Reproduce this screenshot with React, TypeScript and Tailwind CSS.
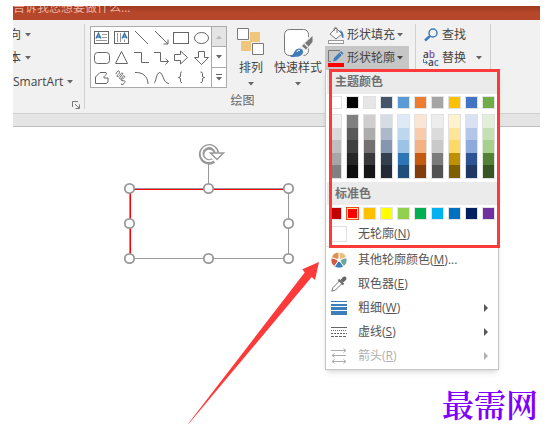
import React from 'react';

const uiFont = "font-['Open_Sans','Noto_Sans_CJK_SC',sans-serif]";

const themeColors = [
  { base: '#ffffff', tints: ['#f2f2f2', '#d9d9d9', '#bfbfbf', '#a6a6a6', '#808080'] },
  { base: '#000000', tints: ['#808080', '#595959', '#404040', '#262626', '#0d0d0d'] },
  { base: '#e7e6e6', tints: ['#d0cece', '#aeabab', '#757070', '#3a3838', '#171616'] },
  { base: '#44546a', tints: ['#d6dce4', '#adb9ca', '#8496b0', '#323f4f', '#222a35'] },
  { base: '#5b9bd5', tints: ['#deebf6', '#bdd7ee', '#9cc3e5', '#2e75b5', '#1e4e79'] },
  { base: '#ed7d31', tints: ['#fbe5d5', '#f7cbac', '#f4b183', '#c55a11', '#833c0b'] },
  { base: '#a5a5a5', tints: ['#ededed', '#dbdbdb', '#c9c9c9', '#7b7b7b', '#525252'] },
  { base: '#ffc000', tints: ['#fff2cc', '#fee599', '#ffd965', '#bf9000', '#7f6000'] },
  { base: '#4472c4', tints: ['#d9e2f3', '#b4c6e7', '#8eaadb', '#2f5496', '#1f3864'] },
  { base: '#70ad47', tints: ['#e2efd9', '#c5e0b3', '#a8d08d', '#538135', '#375623'] },
];

const standardColors = [
  '#c00000', '#ff0000', '#ffc000', '#ffff00', '#92d050',
  '#00b050', '#00b0f0', '#0070c0', '#002060', '#7030a0',
];

const shapes: { name: string; drawing: React.ReactNode }[] = [
  {
    name: '文本框',
    drawing: (
      <>
        <rect x="3.5" y="4.5" width="14" height="12" />
        <path d="M11 7.5h5M11 10.5h5M5 13.5h11" stroke="#999" />
        <path d="M5 11.5 7.5 6.5 10 11.5M6 10h3" stroke="#3b76b5" strokeWidth="1.5" />
      </>
    ),
  },
  {
    name: '竖排文本框',
    drawing: (
      <>
        <rect x="3.5" y="4.5" width="14" height="12" />
        <path d="M6.5 6v9M9.5 6v9M13.5 12.5v2.5" stroke="#999" />
        <path d="M11 11.5 13.5 6.5 16 11.5M12 10h3" stroke="#3b76b5" strokeWidth="1.5" />
      </>
    ),
  },
  { name: '直线', drawing: <path d="M4 4 17 17" /> },
  { name: '箭头', drawing: <path d="M4 4 17 17M17 12.5V17H12.5" /> },
  { name: '矩形', drawing: <rect x="2.5" y="5.5" width="15" height="11" /> },
  { name: '椭圆', drawing: <ellipse cx="10.5" cy="11" rx="7" ry="5.5" /> },
  { name: '圆角矩形', drawing: <rect x="3.5" y="5.5" width="15" height="11" rx="3" /> },
  { name: '三角形', drawing: <path d="M10.5 4.5 16.5 16.5H4.5Z" /> },
  { name: '肘形连接符', drawing: <path d="M3 5.5H10.5V15.5H18" /> },
  { name: '肘形箭头', drawing: <path d="M3 5.5H9.5V14.5H17.5M14.5 11.5 17.5 14.5 14.5 17.5" /> },
  { name: '右箭头', drawing: <path d="M3.5 7.5H9.5V4L16.5 10.5 9.5 17V13.5H3.5Z" /> },
  { name: '下箭头', drawing: <path d="M7.5 4.5H13.5V10.5H17.5L10.5 17.5 3.5 10.5H7.5Z" /> },
  {
    name: '任意多边形',
    drawing: <path d="M4.5 16.5V10L9 5.5H15C17 8 12 8.5 13 11H17V14.5L15.5 16.5Z" />,
  },
  {
    name: '自由曲线',
    drawing: (
      <path d="M5 7C6 4 8 3 8.5 5S4 9 6.5 9.5 10 5 11.5 6 7 11 9 12 12 7 13.5 9 8 13 11 13.5 15 14 13 16.5 9 16 11 17.5" />
    ),
  },
  { name: '弧形', drawing: <path d="M4 5.5C11 5 17 9 17 17" /> },
  { name: '曲线', drawing: <path d="M3 16C5 16 5 6 8.5 5.5S12 16.5 18 16.5" /> },
  {
    name: '左大括号',
    drawing: <path d="M11 5H10.5Q9.5 5 9.5 6.5V9Q9.5 10.5 7.5 10.5 9.5 10.5 9.5 12V14.5Q9.5 15.5 11 15.5" />,
  },
  {
    name: '右大括号',
    drawing: <path d="M9.5 5Q11.5 5 11.5 6.5V9Q11.5 10.5 13.5 10.5 11.5 10.5 11.5 12V14.5Q11.5 15.5 9.5 15.5" />,
  },
];

const Caret = ({ className = 'text-[#666]' }: { className?: string }) => (
  <svg width="6" height="4" viewBox="0 0 6 4" className={`shrink-0 ${className}`} aria-hidden="true">
    <path d="M0 0h6L3 3.5Z" fill="currentColor" />
  </svg>
);

const ShapeGallery = () => (
  <div className="mt-0.5 flex h-[62px] w-[137px] border border-[#ababab] bg-white">
    <div className="grid flex-1 grid-cols-6 grid-rows-3">
      {shapes.map(({ name, drawing }) => (
        <button key={name} aria-label={name} className="flex items-center justify-center">
          <svg width="20" height="20" viewBox="0 0 20 20" fill="none" stroke="#666" strokeWidth="1">
            {drawing}
          </svg>
        </button>
      ))}
    </div>
    <div className="flex w-[15px] flex-col divide-y divide-[#ababab] border-l border-[#ababab]">
      <button aria-label="向上" className="flex flex-1 items-center justify-center bg-[#e4e4e4]">
        <Caret className="rotate-180 text-[#bbb]" />
      </button>
      <button aria-label="向下" className="flex flex-1 items-center justify-center">
        <Caret />
      </button>
      <button aria-label="其他" className="flex flex-1 flex-col items-center justify-center gap-0.5">
        <span className="h-px w-1.5 bg-[#666]" />
        <Caret />
      </button>
    </div>
  </div>
);

const ArrangeIcon = () => (
  <svg width="28" height="28" viewBox="0 0 28 28" aria-hidden="true">
    <path d="M13 4h10v10H13zM4 13h10v10H4z" fill="#f0c67d" />
    <path d="M.5.5h11v11H.5zM15.5 15.5h11v11h-11z" fill="#fff" stroke="#7a7a7a" />
  </svg>
);

const QuickStyleIcon = () => (
  <svg width="30" height="30" viewBox="0 0 30 30" aria-hidden="true">
    <rect x="1.5" y="1.5" width="24" height="26" rx="5" fill="#fff" stroke="#777" />
    <path d="M14 22 29 5V16L20 28H12Z" fill="#f1f1f1" />
    <path d="M29.500 8 19 18 23 21.500 29.500 14Z" fill="#777" />
    <path d="M21.500 15.500 25 19" stroke="#eee" strokeWidth="1.5" />
    <path d="M7 29C12 26 11 21 16 20.5 20 20.5 21 24 19 26.5 17 29 12 29 7 29Z" fill="#3f7cba" />
    <path d="M14 24a2 2 0 0 1 3-1.500" fill="none" stroke="#fff" />
  </svg>
);

const FillIcon = () => (
  <svg width="17" height="18" viewBox="0 0 17 18" fill="none" aria-hidden="true">
    <path d="M2 8 8 2 14 8 8 13Z" fill="#fff" stroke="#777" />
    <path d="M6 5V2.5Q7.5 0 9 2.5V7" stroke="#777" />
    <path d="M11.5 4Q16 5 15.5 12 13 12 13.5 8Z" fill="#3f7cba" />
    <rect x=".5" y="14.5" width="15" height="3" fill="#fff" stroke="#999" />
  </svg>
);

const OutlineIcon = () => (
  <svg width="17" height="18" viewBox="0 0 17 18" fill="none" aria-hidden="true">
    <path d="M12 1.5H.5V12.5H3" stroke="#777" />
    <path d="M5 12.5 6 9 13 2 15.5 4.5 8.5 11.5Z" fill="#3f7cba" />
    <path d="M11.5 3.5 14 6" stroke="#c6c6c6" />
    <path d="M0 14h16v4H0z" fill="#f00" />
  </svg>
);

const FindIcon = () => (
  <svg width="17" height="16" viewBox="0 0 17 16" fill="none" stroke="#3f7cba" aria-hidden="true">
    <circle cx="10" cy="6" r="4" strokeWidth="1.5" />
    <path d="M7 9 2 13.5" strokeWidth="2.5" />
  </svg>
);

const ReplaceIcon = () => (
  <span className="flex w-[17px] flex-col text-[10px] leading-2 font-semibold" aria-hidden="true">
    <span className="text-left">a<span className="text-[#8a4fa8]">b</span></span>
    <span className="flex items-center">
      <svg width="5" height="6" viewBox="0 0 5 6" fill="none" stroke="#3f7cba">
        <path d="M.5 0V3.500H4M2.500 1.500 4.500 3.500 2.500 5.500" />
      </svg>
      a<span className="text-[#3f7cba]">c</span>
    </span>
  </span>
);

const ColorWheelIcon = () => (
  <svg width="16" height="16" viewBox="0 0 16 16" stroke="#fff" aria-hidden="true">
    <path d="M8 8V0A8 8 0 0 1 15.6 5.5Z" fill="#eabf7d" />
    <path d="M8 8 15.6 5.5A8 8 0 0 1 12.7 14.5Z" fill="#6ea597" />
    <path d="M8 8 12.7 14.5A8 8 0 0 1 3.3 14.5Z" fill="#3f7cba" />
    <path d="M8 8 3.3 14.5A8 8 0 0 1 .4 5.5Z" fill="#d65a3f" />
    <path d="M8 8 .4 5.5A8 8 0 0 1 8 0Z" fill="#e3904d" />
    <circle cx="8" cy="8" r="1.5" fill="#fff" />
  </svg>
);

const EyedropperIcon = () => (
  <svg width="16" height="16" viewBox="0 0 16 16" fill="none" aria-hidden="true">
    <path d="M8.5 5 2 11.5.8 15.2 4.5 14 11 7.5" stroke="#777" />
    <path d="M7.5 3.5 12.5 8.5" stroke="#666" strokeWidth="2" />
    <path d="M9.5 4 12 1Q14 0 15 1T15 4L12 6.5Z" fill="#666" />
  </svg>
);

const WeightIcon = () => (
  <svg width="16" height="14" viewBox="0 0 16 14" fill="#3f7cba" aria-hidden="true">
    <path d="M0 0h16v1H0zM0 3h16v2H0zM0 6h16v3H0zM0 10h16v4H0z" />
  </svg>
);

const DashesIcon = () => (
  <svg width="16" height="11" viewBox="0 0 16 11" stroke="#666" aria-hidden="true">
    <path d="M0 .5h16" />
    <path d="M0 3.5h16" strokeDasharray="1 1" />
    <path d="M0 6.5h16" strokeDasharray="2 1" />
    <path d="M0 9.5h16" strokeDasharray="3 1" />
  </svg>
);

const ArrowsIcon = () => (
  <svg width="16" height="16" viewBox="0 0 16 16" fill="none" stroke="#aaa" aria-hidden="true">
    <path d="M0 2.5h15M12.5.5l2.5 2-2.5 2" />
    <path d="M1 7.5h14M3.5 5.5 1 7.5l2.5 2" />
    <path d="M1 13.5h14M3.5 11.5 1 13.5l2.5 2M12.5 11.5l2.5 2-2.5 2" />
  </svg>
);

const menuItems = [
  { label: '其他轮廓颜色', hotkey: 'M', suffix: '...', icon: ColorWheelIcon, submenu: false, disabled: false },
  { label: '取色器', hotkey: 'E', suffix: '', icon: EyedropperIcon, submenu: false, disabled: false },
  { label: '粗细', hotkey: 'W', suffix: '', icon: WeightIcon, submenu: true, disabled: false },
  { label: '虚线', hotkey: 'S', suffix: '', icon: DashesIcon, submenu: true, disabled: false },
  { label: '箭头', hotkey: 'R', suffix: '', icon: ArrowsIcon, submenu: true, disabled: true },
];

const OutlineMenu = () => (
  <div
    role="menu"
    aria-label="形状轮廓"
    className="absolute top-full left-0 z-10 w-[174px] border border-[#c6c6c6] bg-white pb-px text-[#555] shadow-md"
  >
    <h3 className="mx-px flex h-6 items-center bg-[#ebebeb] pl-2 font-bold text-[#707070]">主题颜色</h3>
    <div className="flex gap-1 px-[3px] pt-0.5">
      {themeColors.map(({ base, tints }) => (
        <div key={base} className="flex w-[13px] flex-col gap-[5px]">
          <button aria-label={base} className="h-[13px] border border-[#e2e2e2]" style={{ backgroundColor: base }} />
          <div className="flex h-[65px] flex-col border border-[#e2e2e2]">
            {tints.map((tint) => (
              <button key={tint} aria-label={tint} className="flex-1" style={{ backgroundColor: tint }} />
            ))}
          </div>
        </div>
      ))}
    </div>
    <h3 className="mx-px mt-[3px] flex h-[23px] items-center bg-[#ebebeb] pl-2 font-bold text-[#707070]">标准色</h3>
    <div className="flex gap-1 px-[3px] py-0.5">
      {standardColors.map((color) => (
        <button
          key={color}
          aria-label={color}
          className={`h-[13px] w-[13px] border ${
            color === '#ff0000' ? 'border-[#f04a1c] ring-1 ring-[#ffe0a0] ring-inset' : 'border-[#e2e2e2]'
          }`}
          style={{ backgroundColor: color }}
        />
      ))}
    </div>
    <button role="menuitem" className="flex h-6 w-full items-center gap-[11px] pl-[5px]">
      <span className="h-4 w-4 border border-[#e2e2e2] bg-white" />
      <span>无轮廓(<u>N</u>)</span>
    </button>
    <hr className="mb-px border-[#e2e2e2]" />
    {menuItems.map(({ label, hotkey, suffix, icon: Icon, submenu, disabled }) => (
      <button
        key={label}
        role="menuitem"
        disabled={disabled}
        className={`flex h-6 w-full items-center gap-[11px] pr-2.5 pl-[5px] ${disabled ? 'text-[#b0b0b0]' : ''}`}
      >
        <Icon />
        <span className="flex-1 text-left">{label}(<u>{hotkey}</u>){suffix}</span>
        {submenu && (
          <svg width="4" height="8" viewBox="0 0 4 8" fill="currentColor" aria-hidden="true">
            <path d="M0 0 4 4 0 8Z" />
          </svg>
        )}
      </button>
    ))}
    {/* callout around the colour area */}
    <div className="pointer-events-none absolute -top-px left-[3px] h-[179px] w-[171px] border-3 border-[#fd3a3a]" />
  </div>
);

const Ribbon = () => (
  <div className="flex h-[93px] bg-[#f1f1f1] pt-1 pb-1">
    <div className="flex w-[72px] flex-col border-r border-[#d0d0d0] text-[#444]">
      <button aria-label="文字方向" className="flex h-[22px] items-center gap-1">
        <span className="flex w-2 justify-end overflow-hidden">向</span>
        <Caret />
      </button>
      <button aria-label="对齐文本" className="flex h-6 items-center gap-1">
        <span className="flex w-2 justify-end overflow-hidden">本</span>
        <Caret />
      </button>
      <button className="flex h-[23px] items-center gap-1">
        SmartArt
        <Caret />
      </button>
      <button aria-label="段落设置" className="mt-auto mr-1 self-end">
        <svg width="8" height="8" viewBox="0 0 8 8" fill="none" stroke="#777">
          <path d="M.5 6V.5H6M3 3l4 4M7.5 3.5v4h-4" />
        </svg>
      </button>
    </div>

    <div className="flex w-[331px] flex-col border-r border-[#d0d0d0] pl-[5px] text-[#444]">
      <div className="flex">
        <ShapeGallery />
        <button className="flex w-12 flex-col items-center pt-1">
          <ArrangeIcon />
          <span className="mt-1 leading-4">排列</span>
          <span className="pt-1.5"><Caret /></span>
        </button>
        <button className="mr-1 flex w-[46px] flex-col items-center pt-1 whitespace-nowrap">
          <QuickStyleIcon />
          <span className="mt-0.5 leading-4">快速样式</span>
          <span className="pt-1.5"><Caret /></span>
        </button>
        <div className="flex w-[84px] flex-col">
          <button className="flex h-[22px] items-center gap-0.5 pl-[3px]">
            <FillIcon />
            形状填充
            <Caret />
          </button>
          <div className="relative">
            <button aria-haspopup="menu" aria-expanded="true" className="flex h-[23px] w-full items-center gap-0.5 bg-[#c6c6c6] pl-[3px]">
              <OutlineIcon />
              形状轮廓
              <Caret className="text-[#444]" />
            </button>
            <OutlineMenu />
          </div>
        </div>
      </div>
      <h2 className="mt-auto pr-5 text-center leading-4 text-[#666]">绘图</h2>
    </div>

    <div className="flex w-[75px] flex-col border-r border-[#d0d0d0] pl-[7px] text-[#444]">
      <button className="flex h-[22px] items-center gap-0.5">
        <FindIcon />
        查找
      </button>
      <button className="flex h-6 items-center gap-0.5">
        <ReplaceIcon />
        替换
        <span className="pl-2"><Caret /></span>
      </button>
    </div>
  </div>
);

const handles = [
  [129, 188], [208, 188], [288, 188],
  [129, 223], [288, 223],
  [129, 258], [208, 258], [288, 258],
];

const Slide = () => (
  <main className="relative flex flex-1 flex-col items-end justify-end bg-white pr-0.5 pb-3">
    <svg width="180" height="125" viewBox="120 140 180 125" fill="none" className="absolute top-[13px] left-[107px]" aria-label="矩形">
      <path d="M129.5 258.5H288.5V188.5H129.5ZM208.5 188.5V163" stroke="#999" />
      <path d="M130.5 258V189.5H288" stroke="#f00" />
      {handles.map(([x, y]) => (
        <circle key={`${x}-${y}`} cx={x + 0.5} cy={y + 0.5} r="4.7" fill="#fff" stroke="#999" strokeWidth="1.8" />
      ))}
      {/* rotate handle */}
      <path d="M213.5 160.5A7.5 7.5 0 1 1 216.5 153" stroke="#999" strokeWidth="5.5" />
      <path d="M213 160A7.5 7.5 0 1 1 216.5 153.5" stroke="#fff" strokeWidth="1.8" />
      <path d="M210.5 153H223.5L217 159.5Z" fill="#fff" stroke="#999" strokeWidth="1.5" />
    </svg>
    <svg width="140" height="165" viewBox="185 260 140 165" className="absolute top-[133px] left-[172px]" aria-hidden="true">
      <path d="M188 424 304.7 272.5 302.3 269.3 319 262 315 280 311.7 277 189 423.5Z" fill="#fd3a3a" />
    </svg>
    <p className="font-['Noto_Serif_CJK_SC','Noto_Sans_CJK_SC',serif] text-[32px] leading-10 font-semibold text-[#8000ff]">最需网</p>
  </main>
);

export default function App() {
  return (
    <div className={`flex min-h-screen flex-col bg-white pt-1.5 pr-4 pl-[13px] text-xs ${uiFont}`}>
      <header className="h-3.5 overflow-hidden bg-linear-to-b from-[#9f3a20] via-[#b7472a] to-[#b7472a]">
        <p className="-mt-[5px] leading-3.5 text-[#efb3a3]">告诉我您想要做什么...</p>
      </header>
      <Ribbon />
      <div className="h-3.5 border-t border-b border-t-[#d0d0d0] border-b-[#c0c0c0] bg-[#e5e5e5]" />
      <Slide />
    </div>
  );
}
